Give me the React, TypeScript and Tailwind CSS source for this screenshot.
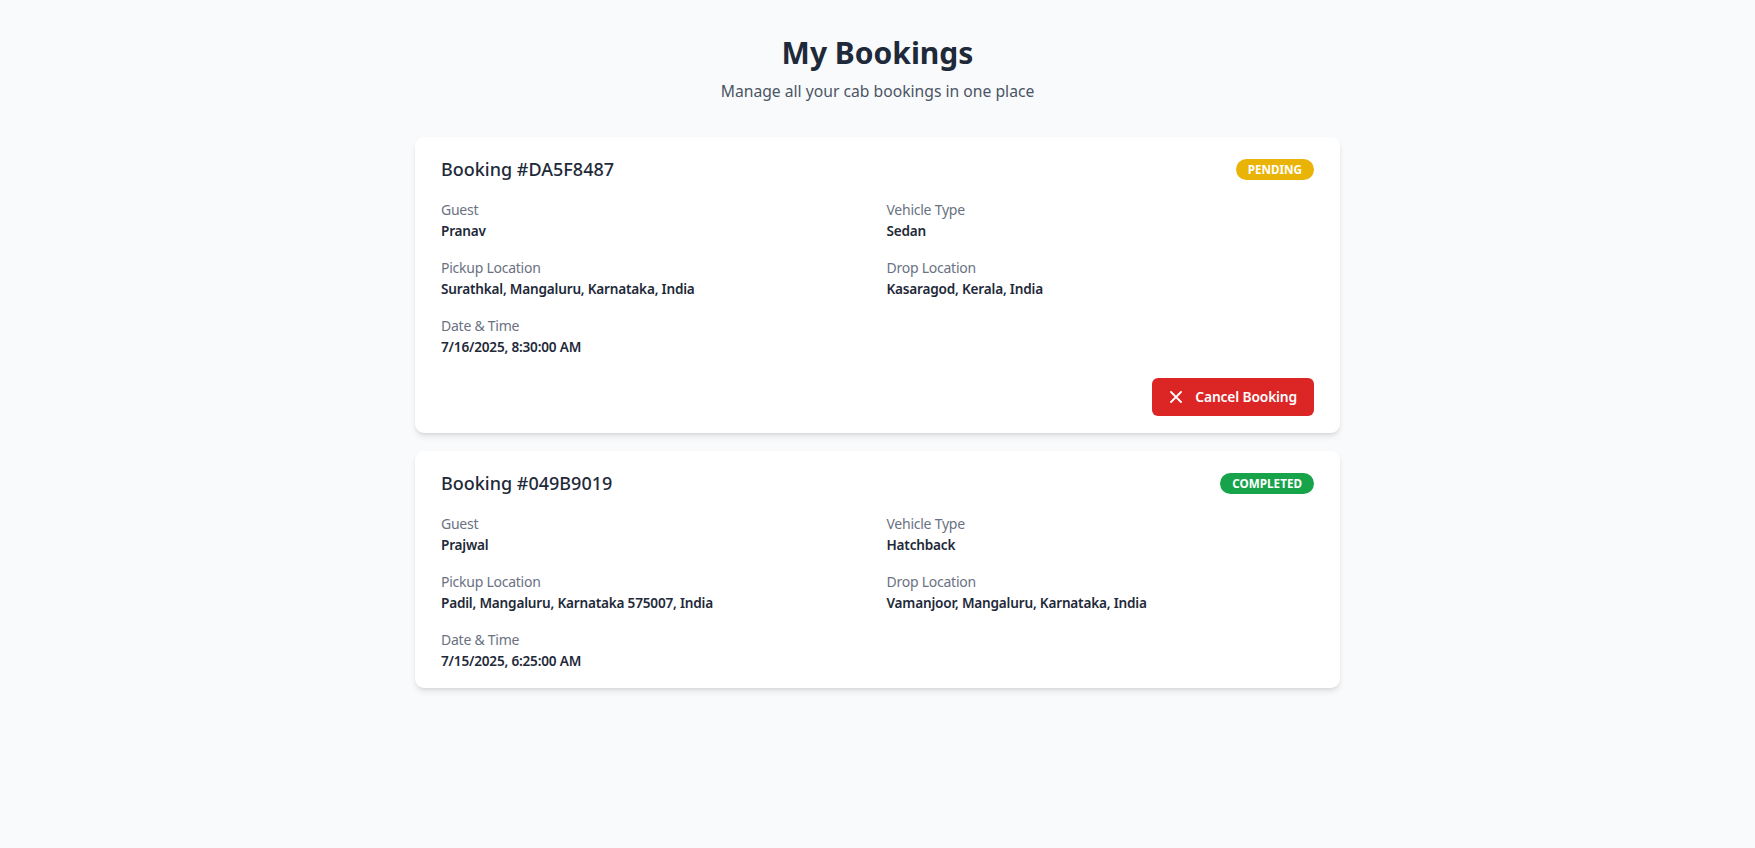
const bookings = [
  {
    id: 'DA5F8487',
    status: 'PENDING',
    guest: 'Pranav',
    vehicle: 'Sedan',
    pickup: 'Surathkal, Mangaluru, Karnataka, India',
    drop: 'Kasaragod, Kerala, India',
    date: '7/16/2025, 8:30:00 AM',
  },
  {
    id: '049B9019',
    status: 'COMPLETED',
    guest: 'Prajwal',
    vehicle: 'Hatchback',
    pickup: 'Padil, Mangaluru, Karnataka 575007, India',
    drop: 'Vamanjoor, Mangaluru, Karnataka, India',
    date: '7/15/2025, 6:25:00 AM',
  },
];

function Field({ label, value }: { label: string; value: string }) {
  return (
    <div>
      <p className="text-[14px] leading-[21px] tracking-[-0.25px] text-gray-500">{label}</p>
      <p className="text-[13.6px] leading-[21px] tracking-[-0.2px] font-semibold text-gray-800">{value}</p>
    </div>
  );
}

export default function App() {
  return (
    <div
      className="min-h-screen bg-gray-50 pt-[33px] pb-10"
      style={{ fontFamily: '"Noto Sans", "Open Sans", sans-serif' }}
    >
      {/* Header */}
      <div className="text-center">
        <h1 className="text-[30px] leading-[40px] font-bold text-gray-800">My Bookings</h1>
        <p className="mt-[6px] text-[15.7px] leading-[24px] text-gray-600">
          Manage all your cab bookings in one place
        </p>
      </div>

      {/* Bookings */}
      <div className="mx-auto mt-[34px] w-[925px] space-y-[18px]">
        {bookings.map((b) => (
          <div key={b.id} className="bg-white rounded-[9px] shadow-md px-[26px] pt-[18px] pb-[17px]">
            <div className="flex h-[28px] items-center justify-between">
              <h2 className="text-[18px] font-medium text-gray-800">Booking #{b.id}</h2>
              <span
                className={
                  b.status === 'PENDING'
                    ? 'rounded-full bg-[#eab308] px-[12px] text-[11.7px] leading-[21px] font-bold text-white'
                    : 'rounded-full bg-[#16a34a] px-[12px] text-[11.7px] leading-[21px] font-bold text-white'
                }
              >
                {b.status}
              </span>
            </div>

            <div className="mt-[16px] grid grid-cols-2 gap-x-[18px] gap-y-[16px]">
              <Field label="Guest" value={b.guest} />
              <Field label="Vehicle Type" value={b.vehicle} />
              <Field label="Pickup Location" value={b.pickup} />
              <Field label="Drop Location" value={b.drop} />
              <Field label="Date & Time" value={b.date} />
            </div>

            {b.status === 'PENDING' && (
              <div className="mt-[21px] flex justify-end">
                <button className="flex h-[38px] items-center gap-[13px] rounded-[6px] bg-[#dc2626] pl-[18px] pr-[17px] text-[13.8px] tracking-[-0.15px] font-semibold text-white">
                  <svg width="12" height="12" viewBox="0 0 12 12" fill="none" stroke="currentColor" strokeWidth="1.8" strokeLinecap="round">
                    <path d="M1 1l10 10M11 1L1 11" />
                  </svg>
                  Cancel Booking
                </button>
              </div>
            )}
          </div>
        ))}
      </div>
    </div>
  );
}
